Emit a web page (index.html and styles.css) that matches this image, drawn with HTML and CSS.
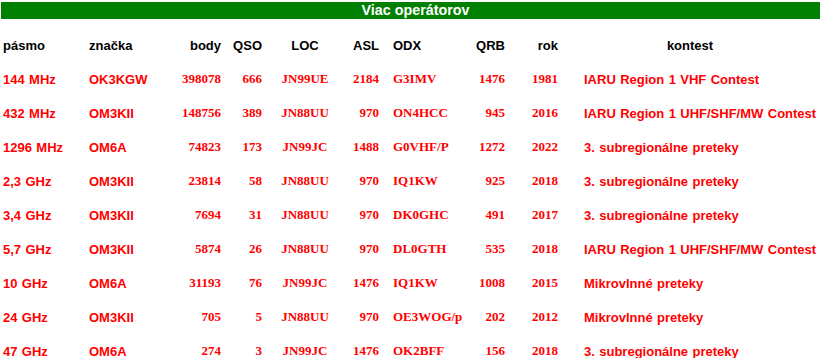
FILE: index.html
```html
<!DOCTYPE html>
<html lang="sk">
<head>
<meta charset="utf-8">
<title>Viac operátorov</title>
<link rel="stylesheet" href="styles.css">
</head>
<body>
<div class="title">Viac operátorov</div>
<table class="records">
  <thead>
    <tr>
      <th class="c1">pásmo</th>
      <th class="c2">značka</th>
      <th class="c3">body</th>
      <th class="c4">QSO</th>
      <th class="c5">LOC</th>
      <th class="c6">ASL</th>
      <th class="c7">ODX</th>
      <th class="c8">QRB</th>
      <th class="c9">rok</th>
      <th class="c10 head-center">kontest</th>
    </tr>
  </thead>
  <tbody>
    <tr><td class="c1">144 MHz</td><td class="c2">OK3KGW</td><td class="c3 num">398078</td><td class="c4 num">666</td><td class="c5 num">JN99UE</td><td class="c6 num">2184</td><td class="c7 num">G3IMV</td><td class="c8 num">1476</td><td class="c9 num">1981</td><td class="c10">IARU Region 1 VHF Contest</td></tr>
    <tr><td class="c1">432 MHz</td><td class="c2">OM3KII</td><td class="c3 num">148756</td><td class="c4 num">389</td><td class="c5 num">JN88UU</td><td class="c6 num">970</td><td class="c7 num">ON4HCC</td><td class="c8 num">945</td><td class="c9 num">2016</td><td class="c10">IARU Region 1 UHF/SHF/MW Contest</td></tr>
    <tr><td class="c1">1296 MHz</td><td class="c2">OM6A</td><td class="c3 num">74823</td><td class="c4 num">173</td><td class="c5 num">JN99JC</td><td class="c6 num">1488</td><td class="c7 num">G0VHF/P</td><td class="c8 num">1272</td><td class="c9 num">2022</td><td class="c10">3. subregionálne preteky</td></tr>
    <tr><td class="c1">2,3 GHz</td><td class="c2">OM3KII</td><td class="c3 num">23814</td><td class="c4 num">58</td><td class="c5 num">JN88UU</td><td class="c6 num">970</td><td class="c7 num">IQ1KW</td><td class="c8 num">925</td><td class="c9 num">2018</td><td class="c10">3. subregionálne preteky</td></tr>
    <tr><td class="c1">3,4 GHz</td><td class="c2">OM3KII</td><td class="c3 num">7694</td><td class="c4 num">31</td><td class="c5 num">JN88UU</td><td class="c6 num">970</td><td class="c7 num">DK0GHC</td><td class="c8 num">491</td><td class="c9 num">2017</td><td class="c10">3. subregionálne preteky</td></tr>
    <tr><td class="c1">5,7 GHz</td><td class="c2">OM3KII</td><td class="c3 num">5874</td><td class="c4 num">26</td><td class="c5 num">JN88UU</td><td class="c6 num">970</td><td class="c7 num">DL0GTH</td><td class="c8 num">535</td><td class="c9 num">2018</td><td class="c10">IARU Region 1 UHF/SHF/MW Contest</td></tr>
    <tr><td class="c1">10 GHz</td><td class="c2">OM6A</td><td class="c3 num">31193</td><td class="c4 num">76</td><td class="c5 num">JN99JC</td><td class="c6 num">1476</td><td class="c7 num">IQ1KW</td><td class="c8 num">1008</td><td class="c9 num">2015</td><td class="c10">Mikrovlnné preteky</td></tr>
    <tr><td class="c1">24 GHz</td><td class="c2">OM3KII</td><td class="c3 num">705</td><td class="c4 num">5</td><td class="c5 num">JN88UU</td><td class="c6 num">970</td><td class="c7 num">OE3WOG/p</td><td class="c8 num">202</td><td class="c9 num">2012</td><td class="c10">Mikrovlnné preteky</td></tr>
    <tr><td class="c1">47 GHz</td><td class="c2">OM6A</td><td class="c3 num">274</td><td class="c4 num">3</td><td class="c5 num">JN99JC</td><td class="c6 num">1476</td><td class="c7 num">OK2BFF</td><td class="c8 num">156</td><td class="c9 num">2018</td><td class="c10">3. subregionálne preteky</td></tr>
  </tbody>
</table>
</body>
</html>
```

FILE: styles.css
```css
html, body {
  margin: 0;
  padding: 0;
  background: #ffffff;
}

body {
  font-family: "Liberation Sans", Arial, sans-serif;
  font-weight: bold;
  font-size: 13px;
}

.title {
  box-sizing: border-box;
  margin: 2px 0 0 1px;
  width: 819px;
  height: 17px;
  line-height: 17px;
  padding-left: 10px;
  background: #008000;
  color: #ffffff;
  font-size: 14.3px;
  text-align: center;
}

.records {
  margin-top: 9px;
  border-collapse: collapse;
  border-spacing: 0;
  table-layout: fixed;
  width: 819px;
}

.records th,
.records td {
  box-sizing: border-box;
  height: 34px;
  padding: 0;
  vertical-align: middle;
  white-space: nowrap;
  font-weight: bold;
  word-spacing: 0.8px;
}

.records th {
  color: #000000;
  font-family: "Liberation Sans", Arial, sans-serif;
}

.records td {
  color: #ff0000;
  font-family: "Liberation Sans", Arial, sans-serif;
}

.records td.num {
  font-family: "Liberation Serif", "Times New Roman", serif;
  word-spacing: 0;
}

.c1 { width: 86px; text-align: left; padding-left: 3px !important; }
.c2 { width: 94px; text-align: left; padding-left: 3px !important; }
.c3 { width: 44px; text-align: right; padding-right: 3px !important; }
.c4 { width: 41px; text-align: right; padding-right: 3px !important; }
.c5 { width: 80px; text-align: center; }
.c6 { width: 37px; text-align: right; padding-right: 3px !important; }
.c7 { width: 88px; text-align: left; padding-left: 11px !important; }
.c8 { width: 38px; text-align: right; padding-right: 3px !important; }
.c9 { width: 53px; text-align: right; padding-right: 3px !important; }
.c10 { width: 258px; text-align: left; padding-left: 23px !important; }

.records th.head-center {
  text-align: center;
  padding-left: 0 !important;
}
```
